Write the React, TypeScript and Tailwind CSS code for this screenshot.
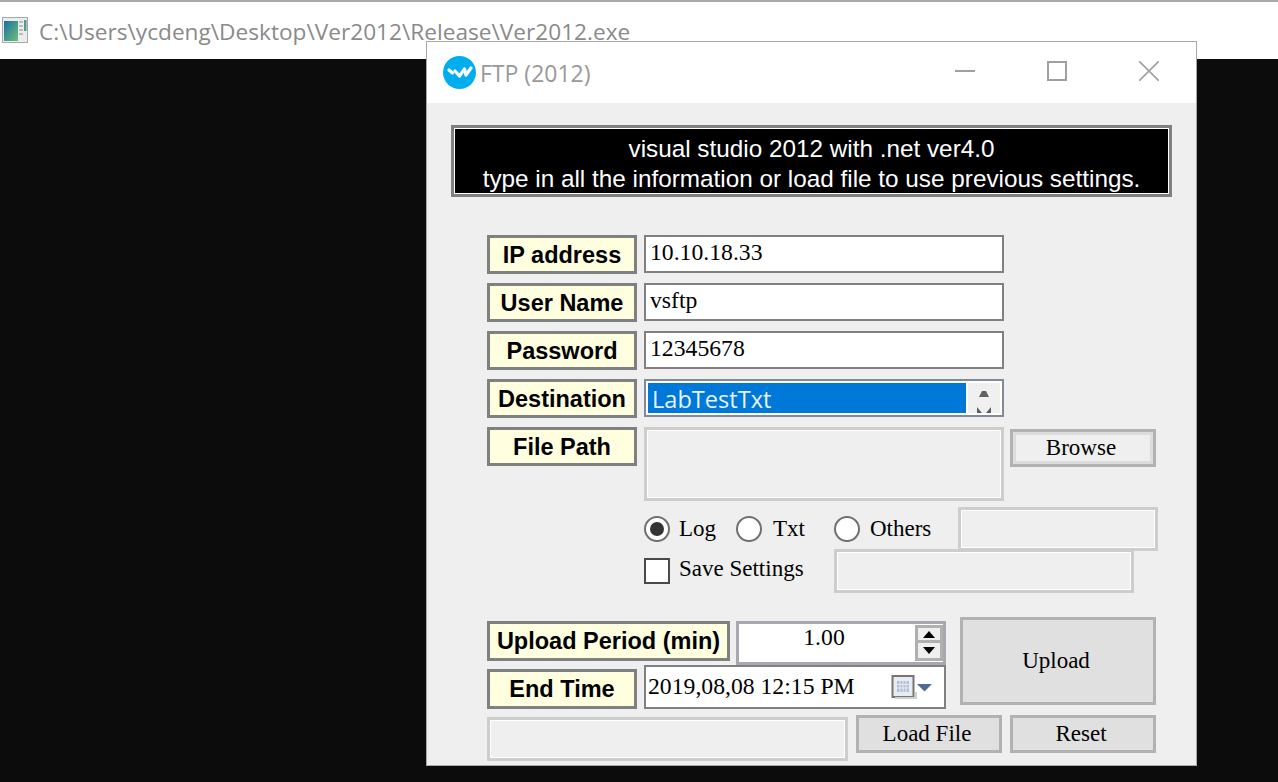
const serif = "font-['Liberation_Serif',serif]";

function Label({ text, width = "w-[150px]", height = "h-[39px]" }: { text: string; width?: string; height?: string }) {
  return (
    <div className={`${width} ${height} shrink-0 border-[3px] border-[#808080] bg-[#ffffe0] pt-[2px] flex items-center justify-center text-[23.5px] font-bold text-black font-['Liberation_Sans',sans-serif]`}>
      {text}
    </div>
  );
}

function TextBox({ value }: { value: string }) {
  return (
    <div className={`w-[360px] h-[38px] border-[2px] border-[#808080] bg-white pl-1 pb-[2px] flex items-center text-[23.7px] text-black ${serif}`}>
      {value}
    </div>
  );
}

function DisabledBox({ className }: { className: string }) {
  return <div className={`border-[3px] border-[#cdcdcd] shadow-[inset_0_0_0_1px_#ffffff] bg-[#efefef] ${className}`} />;
}

function Btn({ text, className }: { text: string; className: string }) {
  return (
    <div className={`border-[3px] border-[#b2b2b2] bg-[#e0e0e0] pr-[4px] flex items-center justify-center text-[23px] text-black ${serif} ${className}`}>
      {text}
    </div>
  );
}

function Radio({ checked }: { checked?: boolean }) {
  return (
    <div className="w-[26px] h-[26px] rounded-full border-[2px] border-[#707070] bg-white flex items-center justify-center shrink-0">
      {checked && <div className="w-[14px] h-[14px] rounded-full bg-[#333333]" />}
    </div>
  );
}

function ExeIcon() {
  return (
    <svg width="26" height="26" viewBox="0 0 26 26" className="shrink-0">
      <defs>
        <linearGradient id="exe" x1="0" y1="0" x2="1" y2="1">
          <stop offset="0" stopColor="#1c6fa0" />
          <stop offset="1" stopColor="#6cc07a" />
        </linearGradient>
      </defs>
      <rect x="0.5" y="0.5" width="25" height="25" fill="#ececec" stroke="#a8a8a8" />
      <rect x="2" y="4" width="14" height="20" fill="url(#exe)" />
      <rect x="17" y="4" width="4" height="2" fill="#b4bfc2" />
      <rect x="17" y="8" width="4" height="2" fill="#b4bfc2" />
      <rect x="17" y="12" width="4" height="2" fill="#b4bfc2" />
      <rect x="17" y="16" width="4" height="2" fill="#b4bfc2" />
      <rect x="22" y="3" width="2.5" height="11" fill="#4f9d8a" />
    </svg>
  );
}

function Logo() {
  return (
    <svg width="33" height="33" viewBox="0 0 33 33" className="shrink-0">
      <circle cx="16.5" cy="16.5" r="16.5" fill="#00aeef" />
      <path d="M6 14l3.5 3M12 15l4.5 5 5-7 1.5 6 5-7" fill="none" stroke="#ffffff" strokeWidth="3.2" strokeLinecap="round" strokeLinejoin="round" />
    </svg>
  );
}

function StepArrow({ up }: { up?: boolean }) {
  return (
    <svg width="12" height="7" viewBox="0 0 12 7">
      <path d={up ? "M6 0l6 7H0z" : "M6 7L0 0h12z"} fill="#000000" />
    </svg>
  );
}

export default function App() {
  return (
    <div className="relative w-[1278px] h-[782px] overflow-hidden bg-[#0c0c0c]">
      <div className="h-[59px] bg-white border-t-[2px] border-[#a8a8a8] flex items-start pl-[2px] pt-[15px] gap-[11px]">
        <ExeIcon />
        <span className="text-[22.65px] leading-[30px] text-[#8a8a8a] font-['Open_Sans',sans-serif]">
          C:\Users\ycdeng\Desktop\Ver2012\Release\Ver2012.exe
        </span>
      </div>

      <div className="absolute left-[426px] top-[41px] w-[771px] h-[725px] border border-[#a8a8a8] bg-[#efefef]">
        <div className="h-[61px] bg-white flex items-center pl-[16px] pr-[37px]">
          <Logo />
          <span className="ml-[4px] pt-[2px] text-[23px] text-[#999999] font-['Open_Sans',sans-serif]">FTP (2012)</span>
          <div className="ml-auto pb-[4px] flex items-center gap-[72px]">
            <div className="w-[20px] h-[2px] bg-[#a0a0a0]" />
            <div className="w-[20px] h-[20px] border-[2px] border-[#a0a0a0]" />
            <svg width="20" height="20" viewBox="0 0 20 20">
              <path d="M0 0L20 20M20 0L0 20" stroke="#a0a0a0" strokeWidth="1.6" />
            </svg>
          </div>
        </div>

        <div className="mt-[22px] mx-[24px] h-[72px] pt-[6px] border-[3px] border-[#808080] bg-black shadow-[inset_0_0_0_1px_#ffffff] flex flex-col items-center justify-center text-[24.3px] leading-[30px] text-white font-['Liberation_Sans',sans-serif]">
          <div>visual studio 2012 with .net ver4.0</div>
          <div>type in all the information or load file to use previous settings.</div>
        </div>

        <div className="mt-[38px] ml-[60px] flex flex-col">
          <div className="flex gap-[7px] h-[48px]">
            <Label text="IP address" />
            <TextBox value="10.10.18.33" />
          </div>
          <div className="flex gap-[7px] h-[48px]">
            <Label text="User Name" />
            <TextBox value="vsftp" />
          </div>
          <div className="flex gap-[7px] h-[48px]">
            <Label text="Password" />
            <TextBox value="12345678" />
          </div>
          <div className="flex gap-[7px] h-[48px]">
            <Label text="Destination" />
            <div className="w-[360px] h-[38px] border-[2px] border-[#808a99] bg-white p-[2px] flex">
              <div className="w-[318px] bg-[#0078d7] pl-[4px] pt-[4px] flex items-center text-[23.6px] text-[#e6f2ff] font-['Open_Sans',sans-serif]">
                LabTestTxt
              </div>
              <div className="flex-1 ml-[2px] bg-[#f0f0f0] overflow-hidden">
                <svg width="14" height="30" viewBox="0 0 14 30" className="mx-auto">
                  <path d="M5 8h4l3 6H2z" fill="#606060" />
                  <path d="M0 24v6h5zM14 24v6H9z" fill="#606060" />
                </svg>
              </div>
            </div>
          </div>
          <div className="flex h-[80px]">
            <Label text="File Path" />
            <DisabledBox className="ml-[7px] w-[360px] h-[74px]" />
            <Btn text="Browse" className="ml-[6px] mt-[2px] w-[146px] h-[38px] shadow-[inset_0_0_0_3px_#dcdcdc] bg-[#efefef]" />
          </div>

          <div className="ml-[157px] flex items-center h-[44px]">
            <Radio checked />
            <span className={`ml-[9px] w-[57px] text-[23px] text-black ${serif}`}>Log</span>
            <Radio />
            <span className={`ml-[11px] w-[61px] text-[23px] text-black ${serif}`}>Txt</span>
            <Radio />
            <span className={`ml-[10px] w-[88px] text-[23px] text-black ${serif}`}>Others</span>
            <DisabledBox className="w-[200px] h-[44px]" />
          </div>
          <div className="ml-[157px] -mt-[2px] flex items-center h-[44px]">
            <div className="w-[26px] h-[26px] border-[2px] border-[#4a4a4a] bg-white shrink-0" />
            <span className={`ml-[9px] pb-[4px] w-[155px] text-[23px] text-black ${serif}`}>Save Settings</span>
            <DisabledBox className="w-[300px] h-[44px]" />
          </div>

          <div className="mt-[24px] flex">
            <div className="w-[459px] flex flex-col">
              <div className="flex mt-[4px]">
                <Label text="Upload Period (min)" width="w-[243px]" height="h-[40px]" />
                <div className="ml-[6px] w-[210px] h-[44px] border-[3px] border-[#a8a8b0] bg-white flex">
                  <div className={`flex-1 pr-[6px] text-center text-[23.7px] leading-[26px] text-black ${serif}`}>1.00</div>
                  <div className="w-[28px] flex flex-col pt-[1px]">
                    <div className="h-[18px] border-[3px] border-[#b0b0b0] bg-[#efefef] flex items-center justify-center">
                      <StepArrow up />
                    </div>
                    <div className="h-[18px] border-[3px] border-t-0 border-[#b0b0b0] bg-[#efefef] flex items-center justify-center">
                      <StepArrow />
                    </div>
                  </div>
                </div>
              </div>
              <div className="flex items-end">
                <Label text="End Time" height="h-[40px]" />
                <div className={`ml-[7px] w-[302px] h-[44px] border-[2px] border-[#808080] bg-white pl-[2px] flex items-center text-[23.7px] text-black ${serif}`}>
                  <span>2019,08,08 12:15 PM</span>
                  <svg width="42" height="26" viewBox="0 0 42 26" className="ml-auto mr-[11px]">
                    <rect x="1.5" y="2" width="21" height="21" fill="#e6ecf6" stroke="#7a7470" strokeWidth="2" />
                    <path d="M6 7h12v11H6z" fill="#b4bfd2" />
                    <path d="M9 7v11M12 7v11M15 7v11M6 10.5h12M6 14h12" stroke="#e6ecf6" strokeWidth="1" />
                    <path d="M4 24h21v-6" fill="none" stroke="#d0d0d0" strokeWidth="2" />
                    <path d="M26 10h15l-7.500 7.500z" fill="#4f6a96" />
                  </svg>
                </div>
              </div>
            </div>
            <Btn text="Upload" className="ml-[14px] w-[196px] h-[88px]" />
          </div>

          <div className="mt-[6px] flex items-start">
            <DisabledBox className="mt-[2px] w-[361px] h-[44px]" />
            <Btn text="Load File" className="ml-[8px] w-[146px] h-[38px]" />
            <Btn text="Reset" className="ml-[8px] w-[146px] h-[38px]" />
          </div>
        </div>
      </div>
    </div>
  );
}
